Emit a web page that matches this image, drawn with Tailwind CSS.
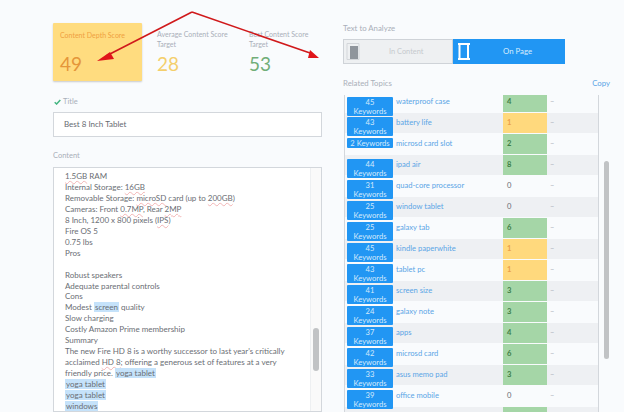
<!DOCTYPE html>
<html>

<head>
    <meta charset="utf-8" />
    <meta name="viewport" content="width=device-width,initial-scale=1" />
    <title>Content Editor</title>
    <script src="https://cdn.jsdelivr.net/npm/@tailwindcss/browser@4"></script>
</head>

<body class="bg-[#f9fbfd]">
    <div class="relative flex h-[412px] w-[624px] gap-[21px] overflow-hidden pl-[53px] font-['Lato',sans-serif] text-[#6b6f75]">

        <!-- left column -->
        <section class="flex w-[269px] shrink-0 flex-col pt-[23px]">
            <div class="flex h-[58px]">
                <div class="h-[58px] w-[89px] rounded-[1px] bg-[#ffdc7f] pl-[7px] pt-[7px] shadow-[0_1px_2px_rgba(0,0,0,0.2)]">
                    <p class="text-[7px] leading-[10px] text-[#efa13f]">Content Depth Score</p>
                    <p class="mt-[13px] text-[19px] leading-[22px] text-[#e5963a]">49</p>
                </div>
                <div class="ml-[15px] w-[77px] pt-[7px]">
                    <p class="text-[7px] leading-[9.5px] text-[#a9afb9]">Average Content Score Target</p>
                    <p class="mt-[4px] text-[19px] leading-[22px] text-[#f4cf6c]">28</p>
                </div>
                <div class="ml-[15px] w-[70px] pt-[7px]">
                    <p class="text-[7px] leading-[9.5px] text-[#a9afb9]">Best Content Score Target</p>
                    <p class="mt-[4px] text-[19px] leading-[22px] text-[#71ae78]">53</p>
                </div>
            </div>

            <div class="mt-[15px] flex h-[11px] items-center gap-[2px] pl-[1px] text-[7.5px] text-[#a9afb9]">
                <svg width="7" height="6" viewBox="0 0 7 6"><path d="M.7 3.2 2.6 5 6.3 1" fill="none" stroke="#43b581" stroke-width="1.5" /></svg>
                <span>Title</span>
            </div>
            <div class="mt-[5px] flex h-[25px] items-center border border-[#d3d7dc] bg-white pl-[10px] text-[8px] text-[#666a70]">Best 8 Inch Tablet</div>

            <p class="mt-[13px] h-[11px] text-[7.5px] leading-[11px] text-[#a9afb9]">Content</p>

            <div class="relative mt-[6px] h-[250px] overflow-hidden border border-[#d3d7dc] bg-white pl-[11px] pr-[12px] text-[8px] leading-[10.9px] text-[#6a6e74]">
                <div class="mt-[-7px]">
                    <p class="invisible">Screen</p>
                    <p><span class="underline decoration-wavy decoration-[#e57373]/50 decoration-[0.5px]">1.5GB</span> RAM</p>
                    <p>Internal Storage: <span class="underline decoration-wavy decoration-[#e57373]/50 decoration-[0.5px]">16GB</span></p>
                    <p>Removable Storage: <span class="underline decoration-wavy decoration-[#e57373]/50 decoration-[0.5px]">microSD</span> card (up to <span class="underline decoration-wavy decoration-[#e57373]/50 decoration-[0.5px]">200GB</span>)</p>
                    <p>Cameras: Front <span class="underline decoration-wavy decoration-[#e57373]/50 decoration-[0.5px]">0.7MP</span>, Rear <span class="underline decoration-wavy decoration-[#e57373]/50 decoration-[0.5px]">2MP</span></p>
                    <p>8 Inch, 1200 x 800 pixels (<span class="underline decoration-wavy decoration-[#e57373]/50 decoration-[0.5px]">IPS</span>)</p>
                    <p>Fire OS 5</p>
                    <p>0.75 lbs</p>
                    <p>Pros</p>
                    <p>&nbsp;</p>
                    <p>Robust speakers</p>
                    <p>Adequate parental controls</p>
                    <p>Cons</p>
                    <p>Modest <span class="bg-[#c5e2fa] px-[1px]">screen</span> quality</p>
                    <p>Slow charging</p>
                    <p>Costly Amazon Prime membership</p>
                    <p>Summary</p>
                    <p>The new Fire HD 8 is a worthy successor to last year's critically</p>
                    <p>acclaimed <span class="underline decoration-wavy decoration-[#e57373]/50 decoration-[0.5px]">HD 8</span>; offering a generous set of features at a very</p>
                    <p>friendly price. <span class="bg-[#c5e2fa] px-[1px]">yoga tablet</span></p>
                    <p><span class="bg-[#c5e2fa] px-[1px]">yoga tablet</span></p>
                    <p><span class="bg-[#c5e2fa] px-[1px]">yoga tablet</span></p>
                    <p><span class="bg-[#c5e2fa] px-[1px]">windows</span></p>
                </div>
                <div class="absolute inset-y-0 right-0 w-[11px] border-l border-[#eef0f2] bg-[#fafafa]">
                    <div class="absolute left-[2px] top-[160px] h-[43px] w-[6px] rounded-[3px] bg-[#c1c3c5]"></div>
                </div>
            </div>
        </section>

        <!-- right column -->
        <section class="flex w-[268px] shrink-0 flex-col pt-[23px]">
            <p class="h-[11px] text-[7.8px] leading-[11px] text-[#a9afb9]">Text to Analyze</p>
            <div class="mt-[5px] flex h-[25px] w-[222px]">
                <div class="flex w-[110px] items-center border border-[#cfd3d8] bg-[#eef0f2] pl-[2px]">
                    <svg class="shrink-0" width="14" height="19" viewBox="0 0 14 19"><path d="M1 1.500h12M1 17.500h12M1 1.500v16M13 1.500v16" fill="none" stroke="#d3d6da" /><rect x="4" y="4" width="8" height="13" fill="#8f959c" /></svg>
                    <span class="ml-[29px] text-[7.4px] text-[#c6cace]">In Content</span>
                </div>
                <div class="flex w-[112px] items-center bg-[#2196f3] pl-[5px]">
                    <svg class="shrink-0" width="12" height="17" viewBox="0 0 12 17"><path d="M0 1h12M0 16h12" stroke="#fff" stroke-width="2" /><path d="M1.500 1v15M10 1v15" stroke="#fff" stroke-width="2" /></svg>
                    <span class="ml-[33px] text-[7.8px] text-[#d8ecfd]">On Page</span>
                </div>
            </div>
            <div class="mt-[14px] flex h-[11px] items-center justify-between pr-[1px] text-[7.8px]">
                <span class="text-[#a9afb9]">Related Topics</span>
                <span class="text-[#5aa5e6]">Copy</span>
            </div>

            <div class="relative mt-[6px] h-[317px] w-[266px] overflow-hidden">
                <div class="ml-[1px] h-[317px] w-[255px] overflow-hidden border-x border-[#d3d7dc]">
                    <div class="mt-[-3px] text-[7.6px]">
                        <div class="flex h-[21px]">
                            <div class="mx-[2px] mt-[5px] flex h-[19px] w-[46px] flex-col items-center justify-center rounded-[1px] bg-[#2196f3] text-center leading-[9px] text-[#d5eafc]"><span>45</span><span>Keywords</span></div>
                            <span class="ml-[1px] flex h-[20px] w-[107px] items-center text-[#5aa5e6]">waterproof case</span>
                            <span class="flex h-[20px] w-[44px] items-center bg-[#a5d6a7] pl-[4px] font-bold text-[#3f7f45]">4</span>
                            <span class="flex h-[20px] items-center pl-[3px] text-[#a9afb9]">–</span>
                        </div>
                        <div class="flex h-[21px] bg-[linear-gradient(#eef0f3_20px,transparent_20px)]">
                            <div class="mx-[2px] mt-[4px] flex h-[19px] w-[46px] flex-col items-center justify-center rounded-[1px] bg-[#2196f3] text-center leading-[9px] text-[#d5eafc]"><span>43</span><span>Keywords</span></div>
                            <span class="ml-[1px] flex h-[20px] w-[107px] items-center text-[#5aa5e6]">battery life</span>
                            <span class="flex h-[20px] w-[44px] items-center bg-[#ffd97d] pl-[4px] font-bold text-[#eba04a]">1</span>
                            <span class="flex h-[20px] items-center pl-[3px] text-[#a9afb9]">–</span>
                        </div>
                        <div class="flex h-[21px]">
                            <div class="mx-[2px] mt-[4px] flex h-[10px] w-[46px] items-center justify-center rounded-[1px] bg-[#2196f3] text-center leading-[9px] text-[#d5eafc]">2 Keywords</div>
                            <span class="ml-[1px] flex h-[20px] w-[107px] items-center text-[#5aa5e6]">microsd card slot</span>
                            <span class="flex h-[20px] w-[44px] items-center bg-[#a5d6a7] pl-[4px] font-bold text-[#3f7f45]">2</span>
                            <span class="flex h-[20px] items-center pl-[3px] text-[#a9afb9]">–</span>
                        </div>
                        <div class="flex h-[21px] bg-[linear-gradient(#eef0f3_20px,transparent_20px)]">
                            <div class="mx-[2px] mt-[4px] flex h-[19px] w-[46px] flex-col items-center justify-center rounded-[1px] bg-[#2196f3] text-center leading-[9px] text-[#d5eafc]"><span>44</span><span>Keywords</span></div>
                            <span class="ml-[1px] flex h-[20px] w-[107px] items-center text-[#5aa5e6]">ipad air</span>
                            <span class="flex h-[20px] w-[44px] items-center bg-[#a5d6a7] pl-[4px] font-bold text-[#3f7f45]">8</span>
                            <span class="flex h-[20px] items-center pl-[3px] text-[#a9afb9]">–</span>
                        </div>
                        <div class="flex h-[21px]">
                            <div class="mx-[2px] mt-[4px] flex h-[19px] w-[46px] flex-col items-center justify-center rounded-[1px] bg-[#2196f3] text-center leading-[9px] text-[#d5eafc]"><span>31</span><span>Keywords</span></div>
                            <span class="ml-[1px] flex h-[20px] w-[107px] items-center text-[#5aa5e6]">quad-core processor</span>
                            <span class="flex h-[20px] w-[44px] items-center pl-[4px] text-[#6b6f75]">0</span>
                            <span class="flex h-[20px] items-center pl-[3px] text-[#a9afb9]">–</span>
                        </div>
                        <div class="flex h-[21px] bg-[linear-gradient(#eef0f3_20px,transparent_20px)]">
                            <div class="mx-[2px] mt-[4px] flex h-[19px] w-[46px] flex-col items-center justify-center rounded-[1px] bg-[#2196f3] text-center leading-[9px] text-[#d5eafc]"><span>25</span><span>Keywords</span></div>
                            <span class="ml-[1px] flex h-[20px] w-[107px] items-center text-[#5aa5e6]">window tablet</span>
                            <span class="flex h-[20px] w-[44px] items-center pl-[4px] text-[#6b6f75]">0</span>
                            <span class="flex h-[20px] items-center pl-[3px] text-[#a9afb9]">–</span>
                        </div>
                        <div class="flex h-[21px]">
                            <div class="mx-[2px] mt-[4px] flex h-[19px] w-[46px] flex-col items-center justify-center rounded-[1px] bg-[#2196f3] text-center leading-[9px] text-[#d5eafc]"><span>25</span><span>Keywords</span></div>
                            <span class="ml-[1px] flex h-[20px] w-[107px] items-center text-[#5aa5e6]">galaxy tab</span>
                            <span class="flex h-[20px] w-[44px] items-center bg-[#a5d6a7] pl-[4px] font-bold text-[#3f7f45]">6</span>
                            <span class="flex h-[20px] items-center pl-[3px] text-[#a9afb9]">–</span>
                        </div>
                        <div class="flex h-[21px] bg-[linear-gradient(#eef0f3_20px,transparent_20px)]">
                            <div class="mx-[2px] mt-[4px] flex h-[19px] w-[46px] flex-col items-center justify-center rounded-[1px] bg-[#2196f3] text-center leading-[9px] text-[#d5eafc]"><span>45</span><span>Keywords</span></div>
                            <span class="ml-[1px] flex h-[20px] w-[107px] items-center text-[#5aa5e6]">kindle paperwhite</span>
                            <span class="flex h-[20px] w-[44px] items-center bg-[#ffd97d] pl-[4px] font-bold text-[#eba04a]">1</span>
                            <span class="flex h-[20px] items-center pl-[3px] text-[#a9afb9]">–</span>
                        </div>
                        <div class="flex h-[21px]">
                            <div class="mx-[2px] mt-[4px] flex h-[19px] w-[46px] flex-col items-center justify-center rounded-[1px] bg-[#2196f3] text-center leading-[9px] text-[#d5eafc]"><span>43</span><span>Keywords</span></div>
                            <span class="ml-[1px] flex h-[20px] w-[107px] items-center text-[#5aa5e6]">tablet pc</span>
                            <span class="flex h-[20px] w-[44px] items-center bg-[#ffd97d] pl-[4px] font-bold text-[#eba04a]">1</span>
                            <span class="flex h-[20px] items-center pl-[3px] text-[#a9afb9]">–</span>
                        </div>
                        <div class="flex h-[21px] bg-[linear-gradient(#eef0f3_20px,transparent_20px)]">
                            <div class="mx-[2px] mt-[4px] flex h-[19px] w-[46px] flex-col items-center justify-center rounded-[1px] bg-[#2196f3] text-center leading-[9px] text-[#d5eafc]"><span>41</span><span>Keywords</span></div>
                            <span class="ml-[1px] flex h-[20px] w-[107px] items-center text-[#5aa5e6]">screen size</span>
                            <span class="flex h-[20px] w-[44px] items-center bg-[#a5d6a7] pl-[4px] font-bold text-[#3f7f45]">3</span>
                            <span class="flex h-[20px] items-center pl-[3px] text-[#a9afb9]">–</span>
                        </div>
                        <div class="flex h-[21px]">
                            <div class="mx-[2px] mt-[4px] flex h-[19px] w-[46px] flex-col items-center justify-center rounded-[1px] bg-[#2196f3] text-center leading-[9px] text-[#d5eafc]"><span>24</span><span>Keywords</span></div>
                            <span class="ml-[1px] flex h-[20px] w-[107px] items-center text-[#5aa5e6]">galaxy note</span>
                            <span class="flex h-[20px] w-[44px] items-center bg-[#a5d6a7] pl-[4px] font-bold text-[#3f7f45]">3</span>
                            <span class="flex h-[20px] items-center pl-[3px] text-[#a9afb9]">–</span>
                        </div>
                        <div class="flex h-[21px] bg-[linear-gradient(#eef0f3_20px,transparent_20px)]">
                            <div class="mx-[2px] mt-[4px] flex h-[19px] w-[46px] flex-col items-center justify-center rounded-[1px] bg-[#2196f3] text-center leading-[9px] text-[#d5eafc]"><span>37</span><span>Keywords</span></div>
                            <span class="ml-[1px] flex h-[20px] w-[107px] items-center text-[#5aa5e6]">apps</span>
                            <span class="flex h-[20px] w-[44px] items-center bg-[#a5d6a7] pl-[4px] font-bold text-[#3f7f45]">4</span>
                            <span class="flex h-[20px] items-center pl-[3px] text-[#a9afb9]">–</span>
                        </div>
                        <div class="flex h-[21px]">
                            <div class="mx-[2px] mt-[4px] flex h-[19px] w-[46px] flex-col items-center justify-center rounded-[1px] bg-[#2196f3] text-center leading-[9px] text-[#d5eafc]"><span>42</span><span>Keywords</span></div>
                            <span class="ml-[1px] flex h-[20px] w-[107px] items-center text-[#5aa5e6]">microsd card</span>
                            <span class="flex h-[20px] w-[44px] items-center bg-[#a5d6a7] pl-[4px] font-bold text-[#3f7f45]">6</span>
                            <span class="flex h-[20px] items-center pl-[3px] text-[#a9afb9]">–</span>
                        </div>
                        <div class="flex h-[21px] bg-[linear-gradient(#eef0f3_20px,transparent_20px)]">
                            <div class="mx-[2px] mt-[4px] flex h-[19px] w-[46px] flex-col items-center justify-center rounded-[1px] bg-[#2196f3] text-center leading-[9px] text-[#d5eafc]"><span>33</span><span>Keywords</span></div>
                            <span class="ml-[1px] flex h-[20px] w-[107px] items-center text-[#5aa5e6]">asus memo pad</span>
                            <span class="flex h-[20px] w-[44px] items-center bg-[#a5d6a7] pl-[4px] font-bold text-[#3f7f45]">3</span>
                            <span class="flex h-[20px] items-center pl-[3px] text-[#a9afb9]">–</span>
                        </div>
                        <div class="flex h-[21px]">
                            <div class="mx-[2px] mt-[4px] flex h-[19px] w-[46px] flex-col items-center justify-center rounded-[1px] bg-[#2196f3] text-center leading-[9px] text-[#d5eafc]"><span>39</span><span>Keywords</span></div>
                            <span class="ml-[1px] flex h-[20px] w-[107px] items-center text-[#5aa5e6]">office mobile</span>
                            <span class="flex h-[20px] w-[44px] items-center pl-[4px] text-[#6b6f75]">0</span>
                            <span class="flex h-[20px] items-center pl-[3px] text-[#a9afb9]">–</span>
                        </div>
                        <div class="flex h-[21px] bg-[#eef0f3]">
                            <div class="mx-[2px] w-[46px]"></div>
                            <span class="ml-[1px] w-[107px]"></span>
                            <span class="h-[20px] w-[44px] bg-[#a5d6a7]"></span>
                        </div>
                    </div>
                </div>
                <div class="absolute right-0 top-[66px] h-[198px] w-[5px] rounded-[3px] bg-[#c1c3c5]"></div>
            </div>
        </section>

        <!-- annotation arrows drawn over the screenshot -->
        <svg class="absolute left-0 top-0" width="624" height="100" viewBox="0 0 624 100">
            <path d="M192 12 106 56M192 12 310 53" fill="none" stroke="#d0191b" stroke-width="1.6" />
            <path d="M97 61 110 52 114 59Z" fill="#e0141a" />
            <path d="M319 58 310 50 308 58Z" fill="#e0141a" />
        </svg>
    </div>
</body>

</html>
